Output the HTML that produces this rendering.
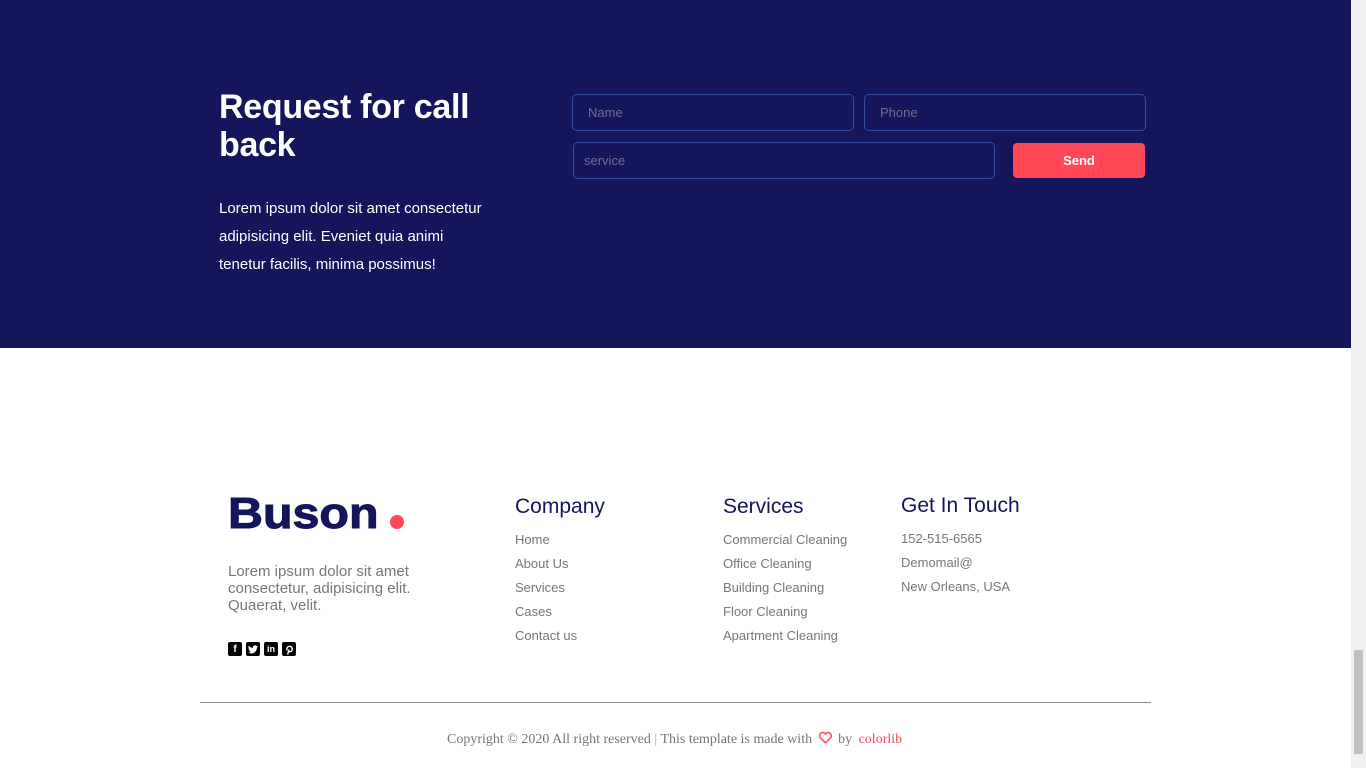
<!DOCTYPE html>
<html><head><meta charset="utf-8"><style>
*{margin:0;padding:0;box-sizing:border-box}
body{width:1366px;height:768px;overflow:hidden;background:#fff;font-family:"Liberation Sans",sans-serif;position:relative}
.top{position:absolute;left:0;top:0;width:1351px;height:348px;background:#15155c}
.sb{position:absolute;right:0;top:0;width:15px;height:768px;background:#f1f1f1}
.sb div{position:absolute;left:3px;right:3px;top:650px;height:104px;background:#c1c1c1}
h2{position:absolute;left:219px;top:88px;color:#fff;font-size:34px;line-height:38px;font-weight:bold;width:300px;letter-spacing:-0.3px}
.p1{position:absolute;left:219px;top:195px;color:#fff;font-size:15px;line-height:28px;width:275px}
.in{position:absolute;border:1px solid #354a9c;border-radius:5px;color:#6a6f8a;font-size:13px;padding-left:15px;display:flex;align-items:center}
.btn{position:absolute;left:1013px;top:143px;width:132px;height:35px;background:#ff4757;border-radius:4px;color:#fff;font-weight:bold;font-size:13px;display:flex;align-items:center;justify-content:center}
.logo{position:absolute;left:228px;top:489px;font-size:44px;font-weight:900;color:#15155c;letter-spacing:0;transform:scaleX(1.1);transform-origin:left;-webkit-text-stroke:1px #15155c}
.dot{position:absolute;left:390px;top:515px;width:14px;height:14px;border-radius:50%;background:#ff4757}
.ft{position:absolute;left:228px;top:563px;color:#777;font-size:15px;line-height:17px;width:230px}
.ic{position:absolute;top:642px;display:flex;gap:4px;left:228px}
.ic span{width:14px;height:14px;background:#000;border-radius:2px;color:#fff;font-size:10px;font-weight:bold;display:flex;align-items:center;justify-content:center}
.col{position:absolute;top:495px}
.col h4{font-weight:normal;font-size:21px;color:#15155c;margin-bottom:9px}
.col a{display:block;color:#777;font-size:13px;line-height:24px}
hr{position:absolute;left:200px;top:702px;width:951px;border:0;border-top:1px solid #888}
.cp{position:absolute;top:731px;left:447px;font-family:"Liberation Serif",serif;font-size:14px;color:#777}
</style></head><body>
<div class="top"></div>
<h2>Request for call back</h2>
<div class="p1">Lorem ipsum dolor sit amet consectetur adipisicing elit. Eveniet quia animi tenetur facilis, minima possimus!</div>
<div class="in" style="left:572px;top:94px;width:282px;height:37px">Name</div>
<div class="in" style="left:864px;top:94px;width:282px;height:37px">Phone</div>
<div class="in" style="left:573px;top:142px;width:422px;height:37px;padding-left:10px">service</div>
<div class="btn">Send</div>
<div class="logo">Buson</div><div class="dot"></div>
<div class="ft">Lorem ipsum dolor sit amet consectetur, adipisicing elit. Quaerat, velit.</div>
<div class="ic"><span>f</span><span>
<svg width="10" height="9" viewBox="0 0 24 20"><path fill="#fff" d="M24 2.4a10 10 0 0 1-2.8.8A5 5 0 0 0 23.3.4a10 10 0 0 1-3.1 1.2A4.9 4.9 0 0 0 11.8 6 14 14 0 0 1 1.7.9a4.9 4.9 0 0 0 1.5 6.6 4.9 4.9 0 0 1-2.2-.6 4.9 4.9 0 0 0 3.9 4.8 4.9 4.9 0 0 1-2.2.1 4.9 4.9 0 0 0 4.6 3.4A9.9 9.9 0 0 1 0 17.3 14 14 0 0 0 7.5 19.5c9.1 0 14-7.5 14-14v-.6A10 10 0 0 0 24 2.4z"/></svg></span><span style="font-size:9px">in</span><span>
<svg width="10" height="11" viewBox="0 0 20 24"><path fill="none" stroke="#fff" stroke-width="3" d="M7 23l3-11M6 14a6 6 0 1 1 6 3c-2 0-3-1-3-3"/></svg></span></div>
<div class="col" style="left:515px"><h4>Company</h4><a>Home</a><a>About Us</a><a>Services</a><a>Cases</a><a>Contact us</a></div>
<div class="col" style="left:723px"><h4>Services</h4><a>Commercial Cleaning</a><a>Office Cleaning</a><a>Building Cleaning</a><a>Floor Cleaning</a><a>Apartment Cleaning</a></div>
<div class="col" style="left:901px;top:494px"><h4>Get In Touch</h4><a>152-515-6565</a><a>Demomail@</a><a>New Orleans, USA</a></div>
<hr>
<div class="cp">Copyright © 2020 All right reserved <span style="color:#9ac">|</span> This template is made with <svg width="15" height="13" viewBox="0 0 24 22" style="vertical-align:-1px;margin:0 2px"><path fill="none" stroke="#ff4757" stroke-width="2.5" d="M12 20L3 11a5 5 0 0 1 9-6 5 5 0 0 1 9 6z"/></svg> by <span style="color:#ff4757;margin-left:3px">colorlib</span></div>
<div class="sb"><div></div></div>
</body></html>
